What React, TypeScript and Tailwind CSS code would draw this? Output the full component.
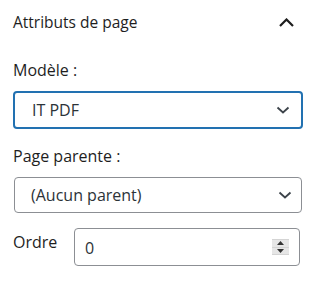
const ChevronDown = () => (
  <svg width="14" height="8" viewBox="0 0 14 8" fill="none" className="shrink-0">
    <path d="M1.5 1.5 L7 6.5 L12.5 1.5" stroke="#3c434a" strokeWidth="1.8" />
  </svg>
);

const ChevronUp = () => (
  <svg width="15" height="9" viewBox="0 0 15 9" fill="none">
    <path d="M1 8 L7.5 1.5 L14 8" stroke="#1e1e1e" strokeWidth="2.2" />
  </svg>
);

const Spinner = () => (
  <div className="flex flex-col w-[17px] h-[16px] bg-[#e6e6e6] border-y border-[#d4d4d4]">
    <div className="flex-1 flex items-center justify-center border-b border-[#d4d4d4]">
      <svg width="7" height="4" viewBox="0 0 7 4">
        <path d="M0 4 L3.5 0 L7 4 Z" fill="#333" />
      </svg>
    </div>
    <div className="flex-1 flex items-center justify-center">
      <svg width="7" height="4" viewBox="0 0 7 4">
        <path d="M0 0 L3.5 4 L7 0 Z" fill="#333" />
      </svg>
    </div>
  </div>
);

const App = () => {
  return (
    <div className="w-[315px] h-[290px] bg-white text-[#1e1e1e] font-['Open_Sans',sans-serif]">
      {/* Header */}
      <div className="flex items-center justify-between h-[45px] pl-[13px] pr-[21px]">
        <span className="text-[15.5px]">Attributs de page</span>
        <ChevronUp />
      </div>

      <div className="px-[13px] flex flex-col">
        <label className="mt-[13px] text-[16px] leading-[24px]">Modèle :</label>
        <div className="mt-[9px] h-[38px] w-[290px] rounded-[4px] border-2 border-[#2271b1] flex items-center justify-between pl-[17px] pr-[11px] text-[16px] text-[#2c3338]">
          <span>IT PDF</span>
          <ChevronDown />
        </div>

        <label className="mt-[15px] text-[16px] leading-[24px]">Page parente :</label>
        <div className="mt-[9px] ml-px h-[36px] w-[288px] rounded-[4px] border border-[#8c8f94] flex items-center justify-between pl-[16px] pr-[9px] text-[16px] text-[#2c3338]">
          <span>(Aucun parent)</span>
          <ChevronDown />
        </div>

        <div className="mt-[15px] flex items-center">
          <label className="w-[61px] text-[16px] -mt-[10px]">Ordre</label>
          <div className="h-[38px] w-[226px] rounded-[4px] border border-[#8c8f94] flex items-center justify-between pl-[10px] pr-[10px] text-[16px] text-[#2c3338]">
            <span className="mt-[2px]">0</span>
            <Spinner />
          </div>
        </div>
      </div>
    </div>
  );
};

export default App;
